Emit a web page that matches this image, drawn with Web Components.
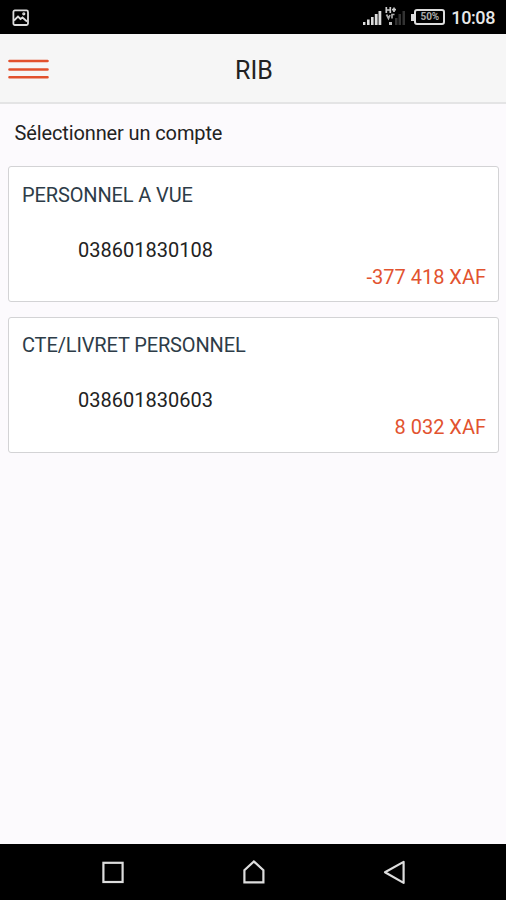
<!DOCTYPE html>
<html lang="fr">
<head>
<meta charset="utf-8">
<title>RIB</title>
<style>
	html,body{
		margin:0;
		height:100%;
	}
	body{
		font-family:Roboto,"Liberation Sans",sans-serif;
		font-size:20px;
		background:#fcfafd;
		overflow:hidden;
	}
</style>
</head>
<body>
<phone-screen>
	<status-bar slot="top" time="10:08" battery="50%"></status-bar>
	<title-bar slot="top">RIB</title-bar>
	<account-list>
		<span slot="label">Sélectionner un compte</span>
		<account-card>
			<span slot="name">PERSONNEL A VUE</span>
			<span slot="number">038601830108</span>
			<span slot="amount">-377 418 XAF</span>
		</account-card>
		<account-card>
			<span slot="name">CTE/LIVRET PERSONNEL</span>
			<span slot="number">038601830603</span>
			<span slot="amount">8 032 XAF</span>
		</account-card>
	</account-list>
	<nav-bar slot="bottom"></nav-bar>
</phone-screen>
<script>
class phonescreen extends HTMLElement{
	constructor(){
		super()
		this.attachShadow({mode:"open"})
		this.shadowRoot.innerHTML=`
			<style>
				:host{
					display:flex;
					flex-direction:column;
					height:100vh;
				}
				main{
					flex:1;
				}
			</style>
			<slot name="top"></slot>
			<main><slot></slot></main>
			<slot name="bottom"></slot>
		`
	}
}

class statusbar extends HTMLElement{
	constructor(){
		super()
		this.attachShadow({mode:"open"})
		this.shadowRoot.innerHTML=`
			<style>
				:host{
					display:flex;
					align-items:center;
					box-sizing:border-box;
					height:34px;
					padding:0 11px 0 12px;
					background:#000;
					color:#e8e8e8;
				}
				svg{
					display:block;
				}
				.picture{
					margin-right:auto;
				}
				.battery{
					display:flex;
					align-items:center;
					margin:0 6px 0 5px;
				}
				.cap{
					width:3px;
					height:7px;
					background:#ddd;
				}
				.cell{
					box-sizing:border-box;
					width:31px;
					height:16px;
					border:2px solid #ddd;
					border-radius:3px;
					font-size:10px;
					font-weight:bold;
					line-height:12px;
					text-align:center;
					color:#aaa;
				}
				.time{
					font-size:18px;
					font-weight:500;
					line-height:34px;
					padding-top:1px;
					letter-spacing:-.4px;
				}
			</style>
			<svg class="picture" width="17" height="17" viewBox="0 0 17 17" fill="none" stroke="#ddd" stroke-width="1.8">
				<rect x="1.4" y="1.4" width="14.6" height="14.6" rx="1.5"/>
				<path d="M2 11.5L6 7.5L8.5 10L10.5 8.5L15 12.5"/>
				<circle cx="11.8" cy="4.8" r=".7"/>
			</svg>
			<svg width="44" height="22" viewBox="0 0 44 22">
				<g fill="#ddd">
					<rect x="1" y="16" width="2.4" height="3"/>
					<rect x="5" y="13.5" width="2.6" height="5.5"/>
					<rect x="9" y="11" width="2.6" height="8"/>
					<rect x="12.8" y="8" width="2.8" height="11"/>
					<rect x="16.5" y="5" width="2.8" height="14"/>
				</g>
				<g fill="#333">
					<rect x="33" y="12" width="2.5" height="7"/>
					<rect x="36.5" y="8" width="2.5" height="11"/>
					<rect x="40.5" y="5" width="2.5" height="14"/>
				</g>
				<path d="M24.3 1V7M28.3 1V7M24 4H28.5M30 3.7H34M32 1.5V6" stroke="#ccc" stroke-width="1.7" fill="none"/>
				<path d="M24.5 8.5L26.5 12.5L28 9M30 12.5V8.5H32.5" stroke="#aaa" stroke-width="1.7" fill="none"/>
				<rect x="27" y="16" width="3" height="3" fill="#bbb"/>
			</svg>
			<div class="battery"><div class="cap"></div><div class="cell"></div></div>
			<div class="time"></div>
		`
	}

	connectedCallback(){
		this.shadowRoot.querySelector(".cell").textContent=this.getAttribute("battery")
		this.shadowRoot.querySelector(".time").textContent=this.getAttribute("time")
	}
}

class titlebar extends HTMLElement{
	constructor(){
		super()
		this.attachShadow({mode:"open"})
		this.shadowRoot.innerHTML=`
			<style>
				:host{
					display:grid;
					grid-template-columns:41px 1fr 39px;
					align-items:center;
					box-sizing:border-box;
					height:70px;
					padding:0 8px;
					background:#f6f6f6;
					border-bottom:2px solid #e4e4e5;
				}
				svg{
					display:block;
					padding-top:2px;
				}
				h1{
					margin:0;
					padding-top:6px;
					font-size:25px;
					font-weight:normal;
					line-height:30px;
					text-align:center;
					color:#222;
				}
			</style>
			<svg width="41" height="22" viewBox="0 0 41 22" stroke="#e2512d" stroke-width="2.6" stroke-linecap="round">
				<path d="M1.5 3H39.5M1.5 11.5H39.5M1.5 19.3H39.5"/>
			</svg>
			<h1><slot></slot></h1>
		`
	}
}

class accountlist extends HTMLElement{
	constructor(){
		super()
		this.attachShadow({mode:"open"})
		this.shadowRoot.innerHTML=`
			<style>
				:host{
					display:flex;
					flex-direction:column;
					gap:15px;
					padding:17px 7px 0 8px;
				}
				.label{
					padding-left:6.5px;
					line-height:24px;
					letter-spacing:-.12px;
					margin-bottom:6px;
					color:#222;
				}
			</style>
			<div class="label"><slot name="label"></slot></div>
			<slot></slot>
		`
	}
}

class accountcard extends HTMLElement{
	constructor(){
		super()
		this.attachShadow({mode:"open"})
		this.shadowRoot.innerHTML=`
			<style>
				:host{
					display:flex;
					flex-direction:column;
					box-sizing:border-box;
					height:136px;
					padding:15px 12px 0;
					background:#fff;
					border:1.5px solid #d3d3d5;
					border-radius:3px;
					line-height:26px;
				}
				:host(:last-of-type){
					padding-top:14px;
				}
				.name{
					padding-left:1px;
					letter-spacing:-.13px;
					color:#2d3c48;
				}
				.number{
					margin:29px 0 1px;
					padding-left:57px;
					color:#222;
				}
				.amount{
					text-align:right;
					color:#e2532f;
				}
			</style>
			<div class="name"><slot name="name"></slot></div>
			<div class="number"><slot name="number"></slot></div>
			<div class="amount"><slot name="amount"></slot></div>
		`
	}
}

class navbar extends HTMLElement{
	constructor(){
		super()
		this.attachShadow({mode:"open"})
		this.shadowRoot.innerHTML=`
			<style>
				:host{
					display:flex;
					align-items:center;
					justify-content:space-between;
					box-sizing:border-box;
					height:56px;
					padding:0 99px 0 100px;
					background:#000;
				}
			</style>
			<svg width="26" height="28" viewBox="0 0 26 28" fill="none" stroke="#ddd" stroke-width="2.2">
				<rect x="3.4" y="4.8" width="19.2" height="19.2"/>
			</svg>
			<svg width="26" height="28" viewBox="0 0 26 28" fill="none" stroke="#ddd" stroke-width="2.2">
				<path d="M3.4 24.3V12.3L12.9 3.5L22.4 12.3V24.3Z"/>
			</svg>
			<svg width="26" height="28" viewBox="0 0 26 28" fill="none" stroke="#ddd" stroke-width="2.2" stroke-linejoin="round">
				<path d="M4 14.3L22.6 3.9V24.9Z"/>
			</svg>
		`
	}
}

customElements.define("phone-screen",phonescreen)
customElements.define("status-bar",statusbar)
customElements.define("title-bar",titlebar)
customElements.define("account-list",accountlist)
customElements.define("account-card",accountcard)
customElements.define("nav-bar",navbar)
</script>
</body>
</html>
